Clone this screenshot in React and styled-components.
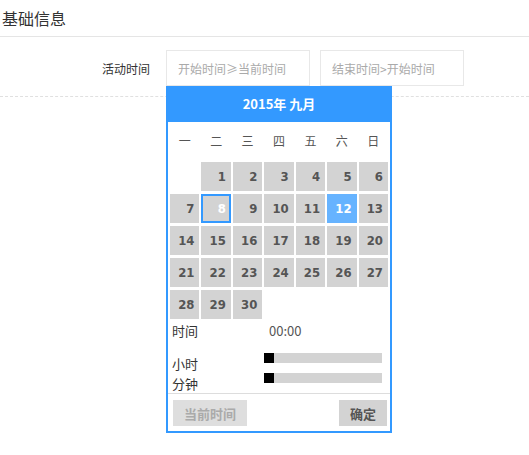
import React from 'react';
import styled, { createGlobalStyle } from 'styled-components';

const GlobalStyle = createGlobalStyle`
	body {
		margin: 0;
		background: #fff;
		font-family: "Noto Sans CJK SC", "Liberation Sans", sans-serif;
		color: #333;
	}
`;

const PageSC = styled.div`
	width: 529px;
	height: 455px;
	position: relative;
`;

const SectionTitle = styled.h2`
	margin: 0;
	padding: 0 2px;
	height: 36px;
	line-height: 36px;
	font-size: 16px;
	font-weight: 400;
	color: #333;
	border-bottom: 1px solid #e5e5e5;
`;

const FormRow = styled.div`
	display: flex;
	align-items: center;
	margin-top: 13px;
	padding-bottom: 10px;
	border-bottom: 1px dashed #e0e0e0;
`;

const Label = styled.label`
	flex: none;
	width: 166px;
	padding-right: 16px;
	box-sizing: border-box;
	text-align: right;
	font-size: 12px;
	color: #333;
`;

const Field = styled.div`
	position: relative;
	margin-right: 10px;
`;

const Input = styled.input`
	width: 144px;
	height: 36px;
	box-sizing: border-box;
	border: 1px solid #e8e8e8;
	padding: 0 11px;
	font-size: 12px;
	font-family: inherit;
	outline: none;
	&::placeholder {
		color: #aaa;
	}
`;

const Picker = styled.div`
	position: absolute;
	top: 36px;
	left: 0;
	width: 226px;
	box-sizing: border-box;
	border: 2px solid #3399ff;
	border-top: 0;
	background: #fff;
	z-index: 2;
`;

const PickerHead = styled.div`
	height: 36px;
	line-height: 36px;
	background: #3399ff;
	color: #fff;
	font-weight: 700;
	font-size: 13px;
	text-align: center;
`;

const Grid = styled.div`
	display: grid;
	grid-template-columns: repeat(7, 1fr);
	column-gap: 2px;
	row-gap: 3px;
	padding: 0 2px;
`;

const WeekDay = styled.div`
	height: 37px;
	line-height: 37px;
	text-align: center;
	font-size: 12px;
	color: #555;
`;

const Day = styled.div`
	height: 29px;
	box-sizing: border-box;
	padding-right: ${({ selected }) => (selected ? 3 : 5)}px;
	text-align: right;
	font-size: 13px;
	font-weight: 700;
	font-family: "DejaVu Sans Condensed", "DejaVu Sans", sans-serif;
	color: ${({ selected, today }) => (selected || today ? '#fff' : '#555')};
	background: ${({ today, empty }) => (empty ? 'transparent' : today ? '#66b3ff' : '#d3d3d3')};
	border: ${({ selected }) => (selected ? '2px solid #3399ff' : '0')};
	line-height: ${({ selected }) => (selected ? '25px' : '29px')};
`;

const TimeRow = styled.div`
	display: flex;
	align-items: center;
	height: 22px;
	margin-bottom: 12px;
	font-size: 13px;
	color: #333;
`;

const TimeLabel = styled.span`
	width: 96px;
	padding-left: 4px;
	box-sizing: border-box;
`;

const TimeValue = styled.span`
	padding-left: 5px;
	color: #555;
`;

const SliderRow = styled.div`
	display: flex;
	align-items: flex-start;
	height: 20px;
	font-size: 13px;
	color: #333;
`;

const SliderLabel = styled.span`
	width: 96px;
	padding-left: 4px;
	box-sizing: border-box;
	line-height: 20px;
	margin-top: 1px;
`;

const Track = styled.div`
	position: relative;
	width: 118px;
	height: 10px;
	background: #d3d3d3;
`;

const Handle = styled.div`
	position: absolute;
	left: 0;
	top: 0;
	width: 10px;
	height: 10px;
	background: #000;
`;

const Footer = styled.div`
	display: flex;
	justify-content: space-between;
	padding: 6px 3px 5px 5px;
	border-top: 1px solid #ddd;
`;

const Button = styled.button`
	height: 26px;
	padding: 0 11px;
	border: 0;
	font-family: inherit;
	font-size: 13px;
	font-weight: 700;
	background: ${({ muted }) => (muted ? '#dedede' : '#d3d3d3')};
	color: ${({ muted }) => (muted ? '#aaa' : '#555')};
`;

const weekDays = ['一', '二', '三', '四', '五', '六', '日'];

const DatePicker = () => {
	const cells = [<Day key="e" empty />];
	for (let d = 1; d <= 30; d++) {
		cells.push(
			<Day key={d} selected={d === 8} today={d === 12}>
				{d}
			</Day>
		);
	}
	return (
		<Picker>
			<PickerHead>2015年 九月</PickerHead>
			<Grid>
				{weekDays.map(w => <WeekDay key={w}>{w}</WeekDay>)}
				{cells}
			</Grid>
			<TimeRow>
				<TimeLabel>时间</TimeLabel>
				<TimeValue>00:00</TimeValue>
			</TimeRow>
			<SliderRow>
				<SliderLabel>小时</SliderLabel>
				<Track><Handle /></Track>
			</SliderRow>
			<SliderRow>
				<SliderLabel>分钟</SliderLabel>
				<Track><Handle /></Track>
			</SliderRow>
			<Footer>
				<Button muted>当前时间</Button>
				<Button>确定</Button>
			</Footer>
		</Picker>
	);
};

export default function App() {
	return (
		<PageSC>
			<GlobalStyle />
			<SectionTitle>基础信息</SectionTitle>
			<FormRow>
				<Label>活动时间</Label>
				<Field>
					<Input placeholder="开始时间≥当前时间" readOnly />
					<DatePicker />
				</Field>
				<Field>
					<Input placeholder="结束时间>开始时间" readOnly />
				</Field>
			</FormRow>
		</PageSC>
	);
}
